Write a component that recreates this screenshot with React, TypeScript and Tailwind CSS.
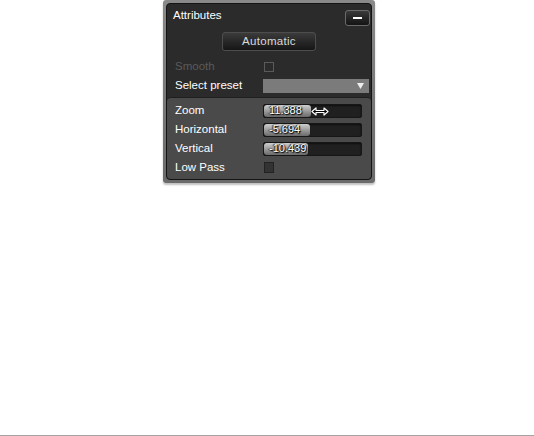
import React from 'react';

const font = { fontFamily: '"Liberation Sans", Arial, sans-serif' };

function Slider({ value, fill, cursor }: { value: string; fill: number; cursor?: boolean }) {
  return (
    <div className="relative h-[14px] w-[99px] rounded-[2px] border border-[#161616] bg-[#202020] shadow-[inset_0_1px_2px_rgba(0,0,0,0.6)]">
      <div
        className="flex h-full items-center rounded-[3px] bg-gradient-to-b from-[#cfcfcf] via-[#9c9c9c] to-[#6a6a6a] pl-[5px] text-[11px] text-white [text-shadow:0_0_2px_#000,1px_1px_1px_#000,-1px_0_1px_#333]"
        style={{ width: fill }}
      >
        {value}
      </div>
      {cursor && (
        <svg className="absolute left-[47px] top-[1px]" width="18" height="11" viewBox="0 0 18 11">
          <path d="M1 5.5 L5 2 V4.5 H13 V2 L17 5.5 L13 9 V6.5 H5 V9 Z" fill="#fff" stroke="#fff" strokeWidth="1.2" strokeLinejoin="round" />
          <path d="M2.5 5.5 H15.5" stroke="#000" strokeWidth="1" />
          <path d="M2 5.5 L4.5 3.3 V7.7 Z M16 5.5 L13.5 3.3 V7.7 Z" fill="#000" />
        </svg>
      )}
    </div>
  );
}

function Row({ label, children, dim }: { label: string; children?: React.ReactNode; dim?: boolean }) {
  return (
    <div className="flex h-[19px] items-center pl-[8px]">
      <span className={`w-[88px] text-[11.5px] ${dim ? 'text-[#5a5a5a]' : 'text-white'}`}>{label}</span>
      {children}
    </div>
  );
}

export default function App() {
  return (
    <div className="relative flex h-[436px] w-[534px] flex-col bg-white" style={font}>
      <div className="pl-[163px]">
        <div className="w-[212px] rounded-[3px] bg-gradient-to-b from-[#8a8a8a] to-[#6a6a6a] p-[3px] shadow-[0_2px_2px_rgba(0,0,0,0.25)]">
          <div className="flex flex-col rounded-[4px] border border-[#141414] bg-[#2b2b2b]">
            <div className="flex h-[23px] items-center justify-between pl-[6px] pr-[1px]">
              <span className="text-[11.5px] text-white">Attributes</span>
              <div className="mt-[5px] flex h-[16px] w-[25px] items-center justify-center rounded-[3px] border border-[#6a6a6a] bg-gradient-to-b from-[#3a3a3a] to-[#141414]">
                <div className="h-[2px] w-[9px] bg-white" />
              </div>
            </div>
            <div className="mt-[5px] flex justify-center">
              <div className="flex h-[19px] w-[94px] items-center justify-center rounded-[3px] border border-[#4d4d4d] bg-gradient-to-b from-[#3b3b3b] to-[#161616] text-[11.5px] tracking-[0.3px] text-[#dadada]">
                Automatic
              </div>
            </div>
            <div className="mt-[6px]">
              <Row label="Smooth" dim>
                <div className="ml-[1px] h-[10px] w-[10px] border border-[#5a5a5a]" />
              </Row>
              <Row label="Select preset">
                <div className="flex h-[14px] w-[106px] items-center justify-end bg-[#7b7b7b] pr-[5px]">
                  <svg width="7" height="6" viewBox="0 0 7 6">
                    <path d="M0 0 L7 0 L3.5 6 Z" fill="#eeeeee" />
                  </svg>
                </div>
              </Row>
            </div>
            <div className="mt-[2px] rounded-[4px] border-t border-[#1e1e1e] bg-[#4a4a4a] pb-[2px] pt-[3px]">
              <Row label="Zoom">
                <Slider value="11.388" fill={47} cursor />
              </Row>
              <Row label="Horizontal">
                <Slider value="-5.694" fill={46} />
              </Row>
              <Row label="Vertical">
                <Slider value="-10.439" fill={44} />
              </Row>
              <Row label="Low Pass">
                <div className="ml-[1px] h-[11px] w-[10px] border border-[#222] bg-[#333]" />
              </Row>
            </div>
          </div>
        </div>
      </div>
      <div className="mt-auto h-[1px] w-full bg-[#a4a4a4]" />
    </div>
  );
}
